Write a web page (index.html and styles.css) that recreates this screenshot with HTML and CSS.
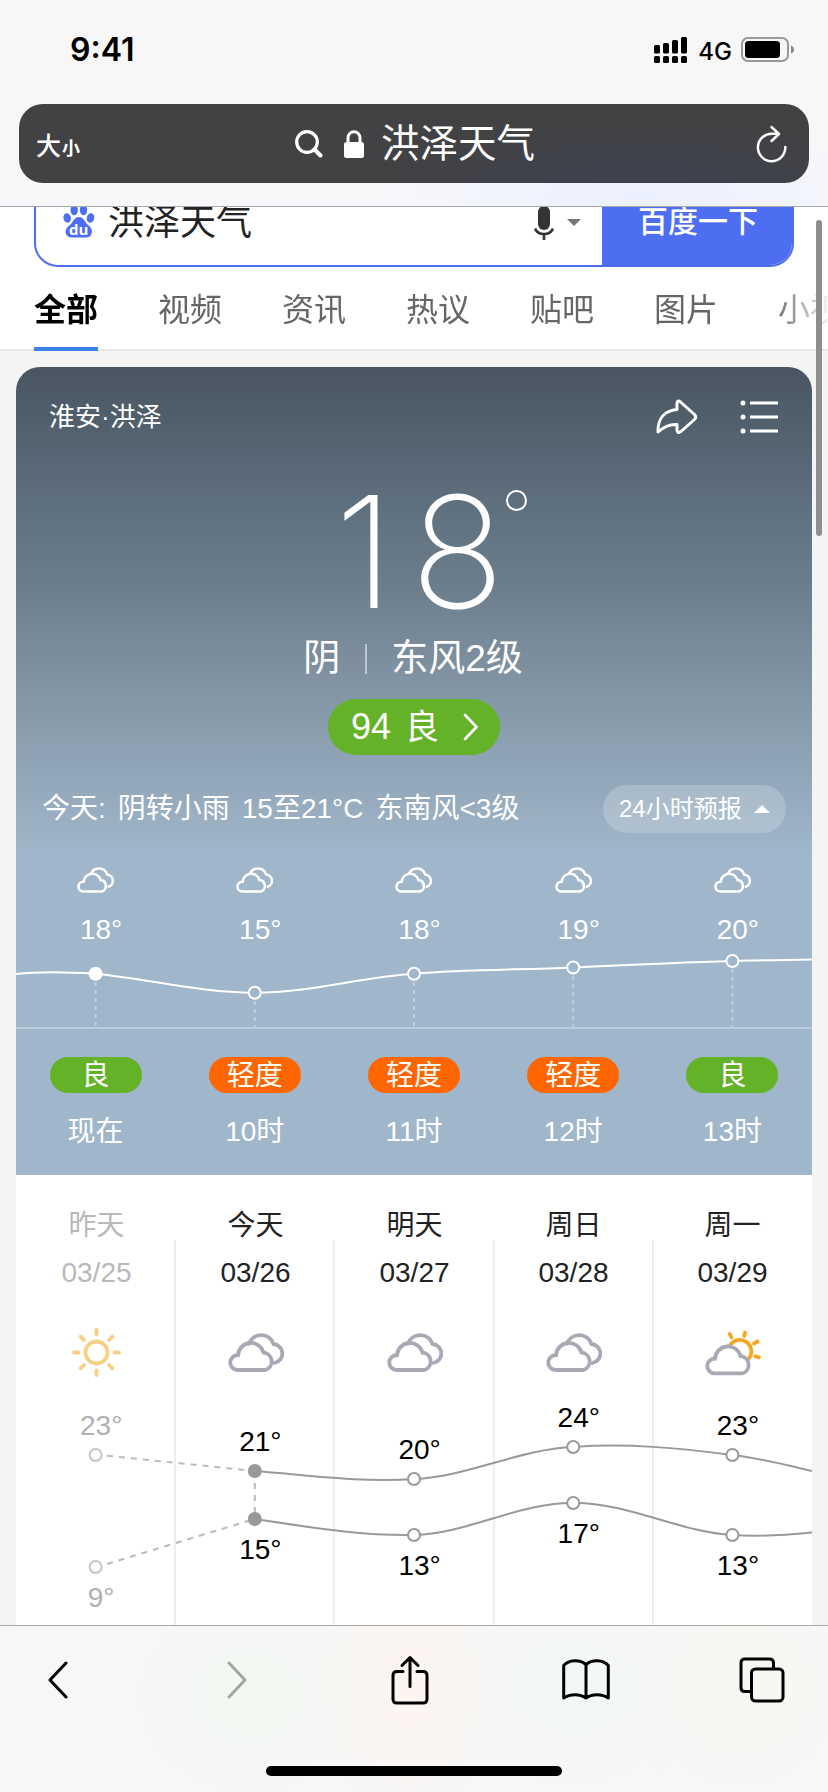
FILE: index.html
```html
<!DOCTYPE html>
<html lang="zh-CN">
<head>
<meta charset="utf-8">
<title>洪泽天气</title>
<link rel="stylesheet" href="styles.css">
</head>
<body>
<svg class="defs" aria-hidden="true">
  <symbol id="front-cloud" viewBox="0 0 56 39"><path d="M9.500 37A7.500 7.500 0 0 1 10 22A13 13 0 0 1 35.500 19.500A9 9 0 0 1 37.500 37Z"/></symbol>
  <symbol id="clouds" viewBox="0 0 56 39">
    <path d="M9.500 37A7.500 7.500 0 0 1 10 22A13 13 0 0 1 35.500 19.500A9 9 0 0 1 37.500 37Z"/>
    <path d="M21 10.500A13 13 0 0 1 45.500 11A9.600 9.600 0 0 1 46.500 30"/>
  </symbol>
</svg>

<header class="chrome-top">
  <div class="status">
    <span class="clock">9:41</span>
    <div class="status-right">
      <svg class="signal" viewBox="0 0 34 27" width="34" height="27">
        <rect x="0" y="8" width="6" height="8.500" rx="1.500"/><rect x="9" y="6" width="6" height="10.500" rx="1.500"/><rect x="18" y="3" width="6" height="13.500" rx="1.500"/><rect x="27" y="0" width="6" height="16.500" rx="1.500"/>
        <rect x="0" y="19" width="6" height="7" rx="1.500"/><rect x="9" y="19" width="6" height="7" rx="1.500"/><rect x="18" y="19" width="6" height="7" rx="1.500"/><rect x="27" y="19" width="6" height="7" rx="1.500"/>
      </svg>
      <span class="net">4G</span>
      <svg class="battery" viewBox="0 0 54 26" width="54" height="26">
        <rect x="1" y="1" width="46" height="23" rx="6" fill="none" stroke="#999" stroke-width="2"/>
        <rect x="4" y="4" width="35" height="17" rx="3.500"/>
        <path d="M50 8.500Q53 9.500 53 12.500T50 16.500Z" fill="#8a8a8a"/>
      </svg>
    </div>
  </div>
  <div class="urlbar">
    <span class="size-btn"><b>大</b><b class="sm">小</b></span>
    <div class="url">
      <svg viewBox="0 0 28 28" width="28" height="28"><circle cx="12" cy="12" r="10.300" fill="none" stroke="#fff" stroke-width="3.200"/><path d="M19.500 19.500L25.500 25.500" stroke="#fff" stroke-width="4" stroke-linecap="round"/></svg>
      <svg class="lock" viewBox="0 0 20 28" width="20" height="28"><rect x="0" y="12" width="20" height="16" rx="2.500" fill="#fff"/><path d="M4 13V8a6 6.300 0 0 1 12 0v5" fill="none" stroke="#fff" stroke-width="3"/></svg>
      <span>洪泽天气</span>
    </div>
    <svg class="reload" viewBox="0 0 32 38" width="32" height="38" fill="none" stroke="#fff" stroke-width="2.500" stroke-linecap="round" stroke-linejoin="round"><path d="M29.300 22A13.700 13.700 0 1 1 17 8.800H22"/><path d="M15.500 2L23 9L15.500 16"/></svg>
  </div>
</header>

<main class="page">
  <div class="results-head">
    <div class="searchbox">
      <svg class="paw" viewBox="0 0 32 36" width="32" height="36" fill="#4e6ef2">
        <ellipse cx="11.200" cy="5" rx="3.700" ry="5.200"/><ellipse cx="20.500" cy="5" rx="3.700" ry="5.200"/>
        <ellipse cx="4.200" cy="13" rx="3.700" ry="4.800" transform="rotate(-15 4.200 13)"/><ellipse cx="27.500" cy="13" rx="3.700" ry="4.800" transform="rotate(15 27.500 13)"/>
        <path d="M16 12C20 12 21 15 24 19C28 22 30 25 28.500 29C27 33.500 22 32.500 16 32.500S5 33.500 3 29C1.500 25 4 22 8 19C11 15 12 12 16 12Z"/>
        <text x="15.700" y="29.500" text-anchor="middle" class="du">du</text>
      </svg>
      <span class="query">洪泽天气</span>
      <svg class="mic" viewBox="0 0 20 36" width="20" height="36"><rect x="4" y="0" width="12" height="24" rx="6" fill="#333"/><path d="M1 22.500C4 30 16 30 19 22.500M10 28V34" fill="none" stroke="#333" stroke-width="2.600"/></svg>
      <svg class="drop" viewBox="0 0 14 8" width="14" height="8"><path d="M0 0H14L7 7Z" fill="#777"/></svg>
      <span class="go">百度一下</span>
    </div>
    <nav class="tabs">
      <span class="on">全部</span><span>视频</span><span>资讯</span><span>热议</span><span>贴吧</span><span>图片</span><span>小视频</span>
    </nav>
  </div>

  <section class="card">
    <div class="hero">
      <div class="place">
        <span>淮安·洪泽</span>
        <div class="actions">
          <svg viewBox="0 0 42 36" width="42" height="36" fill="none" stroke="#fff" stroke-width="3" stroke-linejoin="round"><path d="M2 33C1.500 19 9 11.500 21 10.500V4.500Q21 .5 24.500 3L38.500 15.500Q41 18 38.500 20.500L25 32.500Q21 35 21 31V25.500C13 25 8 27.500 2 33Z"/></svg>
          <svg viewBox="0 0 40 36" width="40" height="36" stroke="#fff" stroke-width="3" fill="#fff"><path d="M11 4H39M11 18H39M11 32H39"/><g stroke="none"><circle cx="4" cy="4" r="2.500"/><circle cx="4" cy="18" r="2.500"/><circle cx="4" cy="32" r="2.500"/></g></svg>
        </div>
      </div>
      <div class="now"><span class="deg">18</span><i class="ring"></i></div>
      <div class="cond"><span>阴</span><i></i><span>东风2级</span></div>
      <div class="aqi"><span>94</span><span class="lv">良</span><svg viewBox="0 0 16 28" width="16" height="28" fill="none" stroke="#fff" stroke-width="2.700" stroke-linecap="round" stroke-linejoin="round"><path d="M2 2L13.500 14L2 26"/></svg></div>
      <div class="today">
        <div class="summary"><span>今天:</span><span>阴转小雨</span><span>15至21°C</span><span>东南风&lt;3级</span></div>
        <div class="toggle">24小时预报<svg viewBox="0 0 16 8" width="16" height="8"><path d="M0 8L8 0L16 8Z" fill="#fff"/></svg></div>
      </div>
    </div>

    <div class="hourly">
      <div class="cols h-icons">
        <svg><use href="#clouds"/></svg><svg><use href="#clouds"/></svg><svg><use href="#clouds"/></svg><svg><use href="#clouds"/></svg><svg><use href="#clouds"/></svg>
      </div>
      <div class="cols h-temps"><span>18°</span><span>15°</span><span>18°</span><span>19°</span><span>20°</span></div>
      <svg class="h-chart" viewBox="0 0 796 80" width="796" height="80">
        <path class="base" d="M0 78H796"/>
        <path class="drop-line" d="M79.600 32V77M238.800 51V77M398 32V77M557.200 26V77M716.400 19V77"/>
        <path class="curve" d="M0 24C25 21 53 22 79.600 23.700C133 29 186 43 238.800 42.700C292 43 345 27 398 23.700C451 19 504 20 557.200 17.500C610 15 663 12.500 716.400 11C743 10 770 10 796 9.500"/>
        <circle class="dot full" cx="79.600" cy="23.700" r="6"/><circle class="dot" cx="238.800" cy="42.700" r="6"/><circle class="dot" cx="398" cy="23.700" r="6"/><circle class="dot" cx="557.200" cy="17.500" r="6"/><circle class="dot" cx="716.400" cy="11" r="6"/>
      </svg>
      <div class="cols h-aqi"><span class="good">良</span><span class="mild">轻度</span><span class="mild">轻度</span><span class="mild">轻度</span><span class="good">良</span></div>
      <div class="cols h-time"><span>现在</span><span>10时</span><span>11时</span><span>12时</span><span>13时</span></div>
    </div>

    <div class="daily">
      <div class="cols rules"><i></i><i></i><i></i><i></i></div>
      <div class="cols d-name"><span class="past">昨天</span><span>今天</span><span>明天</span><span>周日</span><span>周一</span></div>
      <div class="cols d-date"><span class="past">03/25</span><span>03/26</span><span>03/27</span><span>03/28</span><span>03/29</span></div>
      <div class="cols d-icons">
        <svg class="sun" viewBox="0 0 49 49" width="49" height="49"><circle cx="24.500" cy="24.500" r="11"/><path d="M24.500 2V6.500M24.500 42.500V47M2 24.500H6.500M42.500 24.500H47M8.600 8.600L12 12M37 37L40.400 40.400M8.600 40.400L12 37M37 12L40.400 8.600"/></svg>
        <svg class="cl"><use href="#clouds"/></svg><svg class="cl"><use href="#clouds"/></svg><svg class="cl"><use href="#clouds"/></svg>
        <svg class="partly" viewBox="0 0 57 46" width="57" height="46"><g class="ray"><path d="M25 15.500A11.500 11.500 0 1 1 43.500 29"/><path d="M24.700 4L26.500 7.500M40 2.500L39.200 6M52.500 11.500L49 13.500M54 27.300L50.500 26.300"/></g><use href="#front-cloud" y="6.500" width="56" height="39"/></svg>
      </div>
      <svg class="d-chart" viewBox="0 0 796 240" width="796" height="240">
        <path class="dash" d="M91 70.700L238.800 86M91 179L238.800 134M238.800 98V134"/>
        <path class="line" d="M238.800 86C292 90 345 98 398 94C451 92 504 64 557.200 62C610 58 663 63 716.400 70C743 73 770 80 796 86"/>
        <path class="line" d="M238.800 134C292 142 345 151 398 150C451 149 504 117 557.200 118C610 117 663 147 716.400 150C743 152 770 150 796 147.500"/>
        <circle class="pt old" cx="79.600" cy="70" r="6"/><circle class="pt old" cx="79.600" cy="182" r="6"/>
        <circle class="pt cur" cx="238.800" cy="86" r="6"/><circle class="pt cur" cx="238.800" cy="134" r="6"/>
        <circle class="pt" cx="398" cy="94" r="6"/><circle class="pt" cx="557.200" cy="62" r="6"/><circle class="pt" cx="716.400" cy="70" r="6"/>
        <circle class="pt" cx="398" cy="150" r="6"/><circle class="pt" cx="557.200" cy="118" r="6"/><circle class="pt" cx="716.400" cy="150" r="6"/>
        <text class="old" x="64" y="50">23°</text><text x="223.200" y="66">21°</text><text x="382.400" y="74">20°</text><text x="541.600" y="42">24°</text><text x="700.800" y="50">23°</text>
        <text class="old" x="71.800" y="222">9°</text><text x="223.200" y="174">15°</text><text x="382.400" y="190">13°</text><text x="541.600" y="158">17°</text><text x="700.800" y="190">13°</text>
      </svg>
    </div>
  </section>
  <i class="scrollbar"></i>
</main>

<footer class="chrome-bottom">
  <div class="tools">
    <svg viewBox="0 0 22 38" height="38"><path d="M19 2L3 19L19 36"/></svg>
    <svg class="off" viewBox="-3 0 22 38" height="38"><path d="M3 2L19 19L3 36"/></svg>
    <svg viewBox="0 0 38 50" height="50"><path d="M12 16.500H6Q2 16.500 2 20.500V44Q2 48 6 48H32Q36 48 36 44V20.500Q36 16.500 32 16.500H26M19 31.500V3M11 10.500L19 2.500L27 10.500"/></svg>
    <svg viewBox="0 0 48 42" height="42"><path d="M1.700 39V6.500C7 .3 18 .3 24 5.500C30 .3 41 .3 46.300 6.500V39C40 34.500 30 34.500 24 39C18 34.500 8 34.500 1.700 39ZM24 5.500V39"/></svg>
    <svg viewBox="0 0 46 46" height="46"><path d="M12 34.500H6Q2 34.500 2 30.500V6Q2 2 6 2H30.500Q34.500 2 34.500 6V11.500"/><rect x="12.500" y="12" width="31.500" height="32" rx="4"/></svg>
  </div>
  <i class="home"></i>
</footer>
</body>
</html>
```

FILE: styles.css
```css
* { box-sizing: border-box; }
body {
  margin: 0;
  width: 828px;
  height: 1792px;
  display: flex;
  flex-direction: column;
  overflow: hidden;
  background: #f4f4f4;
  font-family: "Liberation Sans", "Noto Sans CJK SC", sans-serif;
  font-weight: 400;
}
svg { display: block; flex: none; }
i { display: block; }
.defs { position: absolute; width: 0; height: 0; }

/* browser top bar */
.chrome-top {
  flex: none;
  height: 207px;
  padding: 0 19px;
  border-bottom: 1px solid #a8a8b0;
  background:
    radial-gradient(ellipse 260px 90px at 640px 206px, #ebf0ff, rgba(235, 240, 255, 0)),
    linear-gradient(#f7f7f7 50%, #f8f8fb);
}
.status {
  height: 104px;
  padding: 0 14px 4px 51px;
  display: flex;
  align-items: center;
  justify-content: space-between;
}
.clock { font: 600 32px/40px Inter, sans-serif; }
.status-right { display: flex; align-items: center; gap: 10px; }
.net { font: 500 24px/28px Inter, sans-serif; margin-top: 3px; }
.battery { margin-left: -1px; }
.urlbar {
  height: 79px;
  padding: 0 21px 0 17px;
  border-radius: 24px;
  display: flex;
  align-items: center;
  justify-content: space-between;
  color: #fff;
  background:
    radial-gradient(ellipse 260px 60px at 620px 79px, #3e4250, rgba(62, 66, 80, 0)),
    #424244;
}
.size-btn { display: flex; align-items: baseline; width: 60px; font-size: 25px; }
.size-btn b { font-weight: 500; }
.size-btn .sm { font-size: 18px; font-weight: 700; margin-left: 1px; }
.url { display: flex; align-items: center; font-size: 38.500px; line-height: 46px; margin-right: 22px; }
.url .lock { margin: 0 17px 0 21px; }

/* scrolled page */
.page { flex: 1; min-height: 0; position: relative; overflow: hidden; }
.results-head { display: flow-root; height: 144px; background: #fff; border-bottom: 2px solid #e6e6e8; }
.searchbox {
  height: 88px;
  margin: -28px 34px 0;
  border: 2px solid #4e6ef2;
  border-radius: 24px;
  display: flex;
  align-items: center;
  overflow: hidden;
  padding-left: 27px;
}
.paw { margin-top: -1px; }
.du { font: 700 15px "Open Sans", sans-serif; fill: #fff; }
.query { font-size: 36px; line-height: 44px; color: #222; margin: 0 auto 0 13px; }
.mic { margin: 1px 13px 0 0; }
.drop { margin-right: 21px; }
.go {
  flex: none;
  width: 192px;
  height: 88px;
  margin-right: -2px;
  background: #4e6ef2;
  color: #fff;
  font-weight: 500;
  font-size: 30px;
  line-height: 86px;
  text-align: center;
}
.tabs {
  height: 84px;
  margin-left: 34px;
  display: flex;
  gap: 60px;
  font-size: 32px;
  line-height: 86px;
  color: #666;
  white-space: nowrap;
  overflow: hidden;
  -webkit-mask-image: linear-gradient(90deg, #000 738px, transparent 800px);
  mask-image: linear-gradient(90deg, #000 738px, transparent 800px);
}
.tabs span { flex: none; }
.tabs .on { color: #000; font-weight: 700; border-bottom: 4px solid #3b82e8; height: 84px; }
.scrollbar { position: absolute; left: 816px; top: 13px; width: 6px; height: 316px; border-radius: 3px; background: #8e8e8e; }

/* weather card */
.card { margin: 16px 16px 0; border-radius: 24px 24px 0 0; overflow: hidden; color: #fff; }
.hero {
  height: 488px;
  padding-top: 32px;
  background: linear-gradient(#495561, #5f707f 29%, #6c7d8c 45%, #8092a1 63%, #90a5b6 82%, #a0b6ca);
}
.place { height: 36px; padding: 0 33px 0 33px; display: flex; justify-content: space-between; align-items: center; font-size: 26px; line-height: 36px; }
.actions { display: flex; gap: 41px; }
.now { height: 204px; display: flex; justify-content: center; position: relative; }
.deg { font: 200 155px/233px Inter, sans-serif; letter-spacing: 17px; margin-left: 28px; }
.ring { position: absolute; left: 490px; top: 55px; width: 21px; height: 21px; border: 2.500px solid #fff; border-radius: 50%; }
.cond { height: 38px; display: flex; justify-content: center; align-items: center; font-size: 37px; line-height: 38px; padding: 2px 2px 0 0; }
.cond i { width: 2px; height: 30px; margin: 0 24px 0 25px; background: rgba(255, 255, 255, .5); }
.aqi {
  width: 172px;
  height: 56px;
  margin: 22px auto 0;
  padding: 0 21px 0 23px;
  border-radius: 28px;
  background: #64b228;
  display: flex;
  align-items: center;
  font-size: 36px;
  line-height: 54px;
}
.aqi .lv { font-size: 34px; margin: 0 auto 0 14px; }
.today { margin-top: 30px; height: 48px; padding: 0 26px; display: flex; justify-content: space-between; align-items: center; }
.summary { display: flex; gap: 12px; font-size: 28px; line-height: 48px; }
.toggle { width: 183px; height: 48px; border-radius: 24px; background: rgba(255, 255, 255, .2); padding: 0 16px; display: flex; align-items: center; justify-content: space-between; font-size: 24px; line-height: 44px; }
.cols { display: grid; grid-template-columns: repeat(5, 1fr); justify-items: center; font-size: 28px; }

.hourly { height: 320px; padding-top: 12px; background: #a0b6ca; }
.h-icons svg { width: 37px; height: 26px; fill: none; stroke: #fff; stroke-width: 3.800; }
.h-temps { margin-top: 22px; line-height: 30px; }
.h-temps span { padding-left: 11px; }
.h-chart { margin-top: 5px; }
.base { stroke: rgba(255, 255, 255, .3); stroke-width: 2; }
.drop-line { stroke: rgba(255, 255, 255, .35); stroke-width: 2; stroke-dasharray: 4 4; }
.curve { fill: none; stroke: #fff; stroke-width: 2; }
.dot { fill: #a0b6ca; stroke: #fff; stroke-width: 2; }
.dot.full { fill: #fff; }
.h-aqi { margin-top: 27px; }
.h-aqi span { width: 92px; height: 36px; border-radius: 18px; line-height: 38px; text-align: center; }
.good { background: #64b228; }
.mild { background: #ff6600; }
.h-time { margin-top: 23px; line-height: 32px; }

.daily { position: relative; height: 450px; padding-top: 35px; background: #fff; color: #222; }
.rules { position: absolute; left: 1px; top: 65px; width: 796px; bottom: 0; justify-items: stretch; }
.rules i { border-right: 2px solid #eee; }
.d-name { line-height: 32px; padding-left: 1px; }
.d-date { line-height: 32px; margin-top: 15px; padding-left: 1px; }
.past { color: #b9b9b9; }
.d-icons { margin-top: 39px; height: 49px; align-items: center; padding-left: 1px; }
.d-icons svg { fill: none; stroke-linecap: round; stroke-width: 3.800; }
.sun { stroke: #f9cf85; }
.cl { width: 56px; height: 39px; stroke: #a9a8b5; }
.partly { stroke: #a9a8b5; margin-left: 2px; }
.ray { stroke: #f5a623; }
.d-chart { margin-top: 8px; position: relative; }
.line { fill: none; stroke: #999; stroke-width: 2; }
.dash { fill: none; stroke: #bbb; stroke-width: 2; stroke-dasharray: 6 6; }
.pt { fill: #fff; stroke: #999; stroke-width: 2; }
.pt.old { stroke: #c4c4c4; }
.pt.cur { fill: #999; }
.d-chart text { font-size: 28px; fill: #000; }
.d-chart text.old { fill: #b0b0b0; }

/* browser bottom bar */
.chrome-bottom {
  flex: none;
  height: 167px;
  border-top: 1px solid #a9aaa8;
  background:
    radial-gradient(ellipse 90px 130px at 410px 60px, #fdf4ef, rgba(253, 244, 239, 0)),
    radial-gradient(ellipse 140px 120px at 250px 70px, #f3f8f2, rgba(243, 248, 242, 0)),
    radial-gradient(ellipse 140px 120px at 570px 60px, #f2f7f5, rgba(242, 247, 245, 0)),
    radial-gradient(ellipse 120px 120px at 740px 60px, #f5f8f1, rgba(245, 248, 241, 0)),
    #f7f7f7;
}
.tools { height: 140px; padding: 0 42px 32px 34px; display: flex; justify-content: space-between; align-items: center; }
.tools svg { width: 48px; fill: none; stroke: #000; stroke-width: 3; stroke-linecap: round; stroke-linejoin: round; }
.tools .off { stroke: #a3a5a2; }
.home { width: 296px; height: 10px; margin: 0 auto; border-radius: 5px; background: #000; }
```
